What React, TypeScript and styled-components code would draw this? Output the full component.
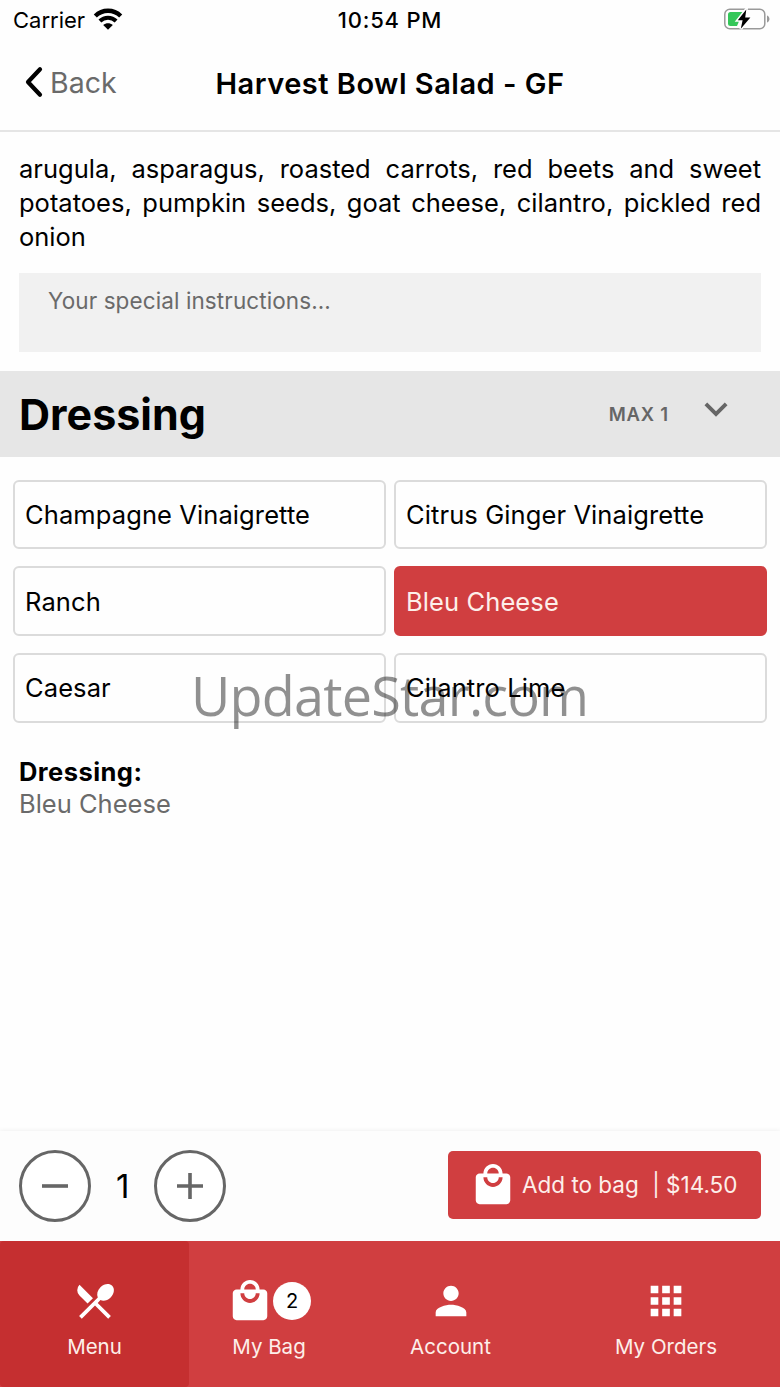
import { useState } from "react"
import styled, { createGlobalStyle } from "styled-components"
import { MdApps, MdExpandMore, MdLocalMall, MdPerson, MdRestaurantMenu } from "react-icons/md"

const GlobalStyle = createGlobalStyle`
    * {
        box-sizing: border-box;
    }
    body {
        margin: 0;
        background-color: #FEFEFE;
        color: #000;
        font-family: Inter, "Liberation Sans", sans-serif;
    }
    button {
        font-family: inherit;
        margin: 0;
    }
`

const Screen = styled.div`
    position: relative;
    display: flex;
    flex-direction: column;
    width: 780px;
    height: 1387px;
    overflow: hidden;
`

const StatusBar = styled.div`
    display: grid;
    grid-template-columns: 1fr auto 1fr;
    align-items: center;
    height: 40px;
    padding: 0 10px 0 13px;
    font-size: 22px;
`

const Carrier = styled.div`
    display: flex;
    align-items: center;
    gap: 8px;

    svg {
        overflow: visible;
    }
`

const Clock = styled.div`
    padding-right: 3px;
    font-weight: 500;
    letter-spacing: 0.8px;
`

const Battery = styled.svg`
    justify-self: end;
    margin-bottom: 2px;
`

const NavBar = styled.header`
    display: grid;
    grid-template-columns: 1fr auto 1fr;
    align-items: center;
    height: 92px;
    padding: 0 25px 6px;
    border-bottom: 2px solid #E5E5E5;
`

const BackButton = styled.button`
    display: flex;
    align-items: center;
    gap: 6px;
    padding: 0;
    border: none;
    background: none;
    color: #6A6A6A;
    font-size: 28.5px;
`

const Title = styled.h1`
    margin: 0;
    padding-top: 3px;
    font-size: 29px;
    font-weight: 600;
    letter-spacing: 0.5px;
`

const Content = styled.main`
    flex: 1;
`

const Description = styled.p`
    margin: 0;
    padding: 20px 19px 18px;
    font-size: 25.5px;
    line-height: 34.2px;
    text-align: justify;
`

const Instructions = styled.div`
    height: 79px;
    margin: 0 19px 19px;
    padding: 14px 29px;
    background-color: #F1F1F1;
    color: #6A6A6A;
    font-size: 22.5px;
    line-height: 28px;
    letter-spacing: 0.1px;
`

const SectionHeader = styled.div`
    display: flex;
    align-items: center;
    height: 86px;
    padding: 0 41px 0 19px;
    background-color: #E6E6E6;
    color: #666;

    svg {
        margin-bottom: 10px;
    }
`

const SectionTitle = styled.h2`
    flex: 1;
    margin: 0;
    color: #000;
    font-size: 43px;
    font-weight: 700;
`

const SectionLimit = styled.span`
    margin-right: 24px;
    font-size: 18.5px;
    font-weight: 600;
    letter-spacing: 0.8px;
`

const Options = styled.div`
    display: grid;
    grid-template-columns: 1fr 1fr;
    grid-auto-rows: 69.4px;
    gap: 17.3px 8px;
    padding: 23.2px 13px 33px;
`

const Option = styled.button<{ $selected: boolean }>`
    padding: 0 10px;
    border: 2px solid ${props => props.$selected ? '#D03E40' : '#DBDBDB'};
    border-radius: 6px;
    background-color: ${props => props.$selected ? '#D03E40' : '#FEFEFE'};
    color: ${props => props.$selected ? '#FDEFEA' : '#000'};
    font-size: 25.5px;
    letter-spacing: 0.1px;
    text-align: left;
`

const Summary = styled.div`
    padding: 0 19px;
    font-size: 25.5px;
    line-height: 32px;
`

const SummaryLabel = styled.div`
    font-weight: 700;
    letter-spacing: 0.45px;
`

const SummaryValue = styled.div`
    color: #6A6A6A;
`

const OrderBar = styled.div`
    display: flex;
    justify-content: space-between;
    height: 110px;
    padding: 19.5px 19px 0;
    background-color: #FDFDFD;
    box-shadow: 0 0 5px rgba(0, 0, 0, 0.08);
`

const Stepper = styled.div`
    display: flex;
    align-items: center;
    height: 71px;
`

const StepButton = styled.button`
    display: flex;
    align-items: center;
    justify-content: center;
    width: 72px;
    height: 72px;
    padding: 0;
    border: 3.5px solid #666;
    border-radius: 50%;
    background-color: #FFF;
`

const Quantity = styled.span`
    width: 63.4px;
    font-size: 33px;
    text-align: center;
`

const AddButton = styled.button`
    display: flex;
    align-items: center;
    width: 313px;
    height: 68px;
    padding: 0 23.5px 0 22px;
    border: none;
    border-radius: 5px;
    background-color: #D03E40;
    color: #FDEFEA;
    font-size: 22.5px;

    svg {
        color: #FFF;
        margin-right: 6px;
    }
`

const Price = styled.span`
    margin-left: auto;
`

const TabBar = styled.nav`
    display: grid;
    grid-template-columns: 189px 160px 203px 228px;
    height: 146px;
    background-color: #D03E40;
`

const Tab = styled.a<{ $active?: boolean }>`
    display: flex;
    flex-direction: column;
    align-items: center;
    padding-top: 37px;
    border-radius: 4px;
    background-color: ${props => props.$active ? '#C52F30' : 'transparent'};
    color: #FFF;
`

const TabIcon = styled.div`
    display: flex;
    align-items: center;
    height: 46px;
`

const TabLabel = styled.span`
    margin-top: 9px;
    color: #FDEFEA;
    font-size: 20.5px;
    line-height: 28px;
`

const Badge = styled.span`
    width: 38px;
    height: 38px;
    border-radius: 50%;
    background-color: #FFF;
    color: #000;
    font-size: 20px;
    line-height: 38px;
    text-align: center;
`

const Watermark = styled.div`
    position: absolute;
    top: 655px;
    left: 191px;
    color: rgba(0, 0, 0, 0.43);
    font-family: "Open Sans", "Noto Sans", sans-serif;
    font-size: 54px;
    line-height: 80px;
    letter-spacing: -0.8px;
    white-space: nowrap;
    pointer-events: none;
`

const dressings = [
    'Champagne Vinaigrette',
    'Citrus Ginger Vinaigrette',
    'Ranch',
    'Bleu Cheese',
    'Caesar',
    'Cilantro Lime',
]

const App = () => {
    const [selected, setSelected] = useState('Bleu Cheese')
    const [quantity, setQuantity] = useState(1)

    return (
        <Screen>
            <GlobalStyle />
            <StatusBar>
                <Carrier>
                    <span>Carrier</span>
                    <svg width="30" height="22" viewBox="0 0 30 22">
                        <path d="M2.3 7C9.4 0 20.6 0 27.7 7" fill="none" stroke="#000" strokeWidth="4.4" />
                        <path d="M6.9 12C11.4 7.6 18.6 7.6 23.1 12" fill="none" stroke="#000" strokeWidth="4" />
                        <path d="M10.2 16C13 13.6 17 13.6 19.8 16L15 20.8Z" />
                    </svg>
                </Carrier>
                <Clock>10:54 PM</Clock>
                <Battery width="46" height="22" viewBox="0 0 46 22">
                    <rect x="0.8" y="1.3" width="40" height="19.5" rx="5" fill="none" stroke="#999" strokeWidth="1.5" />
                    <path d="M43 7.5C46.3 8.6 46.3 13.4 43 14.5Z" fill="#999" />
                    <path d="M6.5 4H19L13 18H6.5Q4 18 4 15.5V6.5Q4 4 6.5 4Z" fill="#34C759" />
                    <path d="M22.3 1.5L13.8 12.2H18.6L16.8 20.8L26.4 9.4H21.2Z" fill="#000" stroke="#FFF" strokeWidth="3" paintOrder="stroke" />
                </Battery>
            </StatusBar>
            <NavBar>
                <BackButton>
                    <svg width="19" height="32" viewBox="0 0 19 32">
                        <path d="M15 3.2L3 16L15 28.8" fill="none" stroke="#000" strokeWidth="4.2" strokeLinecap="round" strokeLinejoin="round" />
                    </svg>
                    <span>Back</span>
                </BackButton>
                <Title>Harvest Bowl Salad - GF</Title>
            </NavBar>
            <Content>
                <Description>
                    arugula, asparagus, roasted carrots, red beets and sweet potatoes, pumpkin seeds, goat cheese, cilantro, pickled red onion
                </Description>
                <Instructions>Your special instructions...</Instructions>
                <SectionHeader>
                    <SectionTitle>Dressing</SectionTitle>
                    <SectionLimit>MAX 1</SectionLimit>
                    <MdExpandMore size={46} />
                </SectionHeader>
                <Options>
                    {dressings.map(name => (
                        <Option key={name} $selected={name === selected} onClick={() => setSelected(name)}>
                            {name}
                        </Option>
                    ))}
                </Options>
                <Summary>
                    <SummaryLabel>Dressing:</SummaryLabel>
                    <SummaryValue>{selected}</SummaryValue>
                </Summary>
            </Content>
            <OrderBar>
                <Stepper>
                    <StepButton onClick={() => setQuantity(prev => Math.max(1, prev - 1))}>
                        <svg width="28" height="28" viewBox="0 0 28 28" stroke="#666" strokeWidth="3.6">
                            <path d="M1 14H27" />
                        </svg>
                    </StepButton>
                    <Quantity>{quantity}</Quantity>
                    <StepButton onClick={() => setQuantity(prev => prev + 1)}>
                        <svg width="28" height="28" viewBox="0 0 28 28" stroke="#666" strokeWidth="3.6">
                            <path d="M1 14H27M14 1V27" />
                        </svg>
                    </StepButton>
                </Stepper>
                <AddButton>
                    <MdLocalMall size={46} />
                    <span>Add to bag</span>
                    <Price>| $14.50</Price>
                </AddButton>
            </OrderBar>
            <TabBar>
                <Tab $active>
                    <TabIcon><MdRestaurantMenu size={46} /></TabIcon>
                    <TabLabel>Menu</TabLabel>
                </Tab>
                <Tab>
                    <TabIcon>
                        <MdLocalMall size={46} />
                        <Badge>2</Badge>
                    </TabIcon>
                    <TabLabel>My Bag</TabLabel>
                </Tab>
                <Tab>
                    <TabIcon><MdPerson size={46} /></TabIcon>
                    <TabLabel>Account</TabLabel>
                </Tab>
                <Tab>
                    <TabIcon><MdApps size={46} /></TabIcon>
                    <TabLabel>My Orders</TabLabel>
                </Tab>
            </TabBar>
            <Watermark>UpdateStar.com</Watermark>
        </Screen>
    )
}

export default App
